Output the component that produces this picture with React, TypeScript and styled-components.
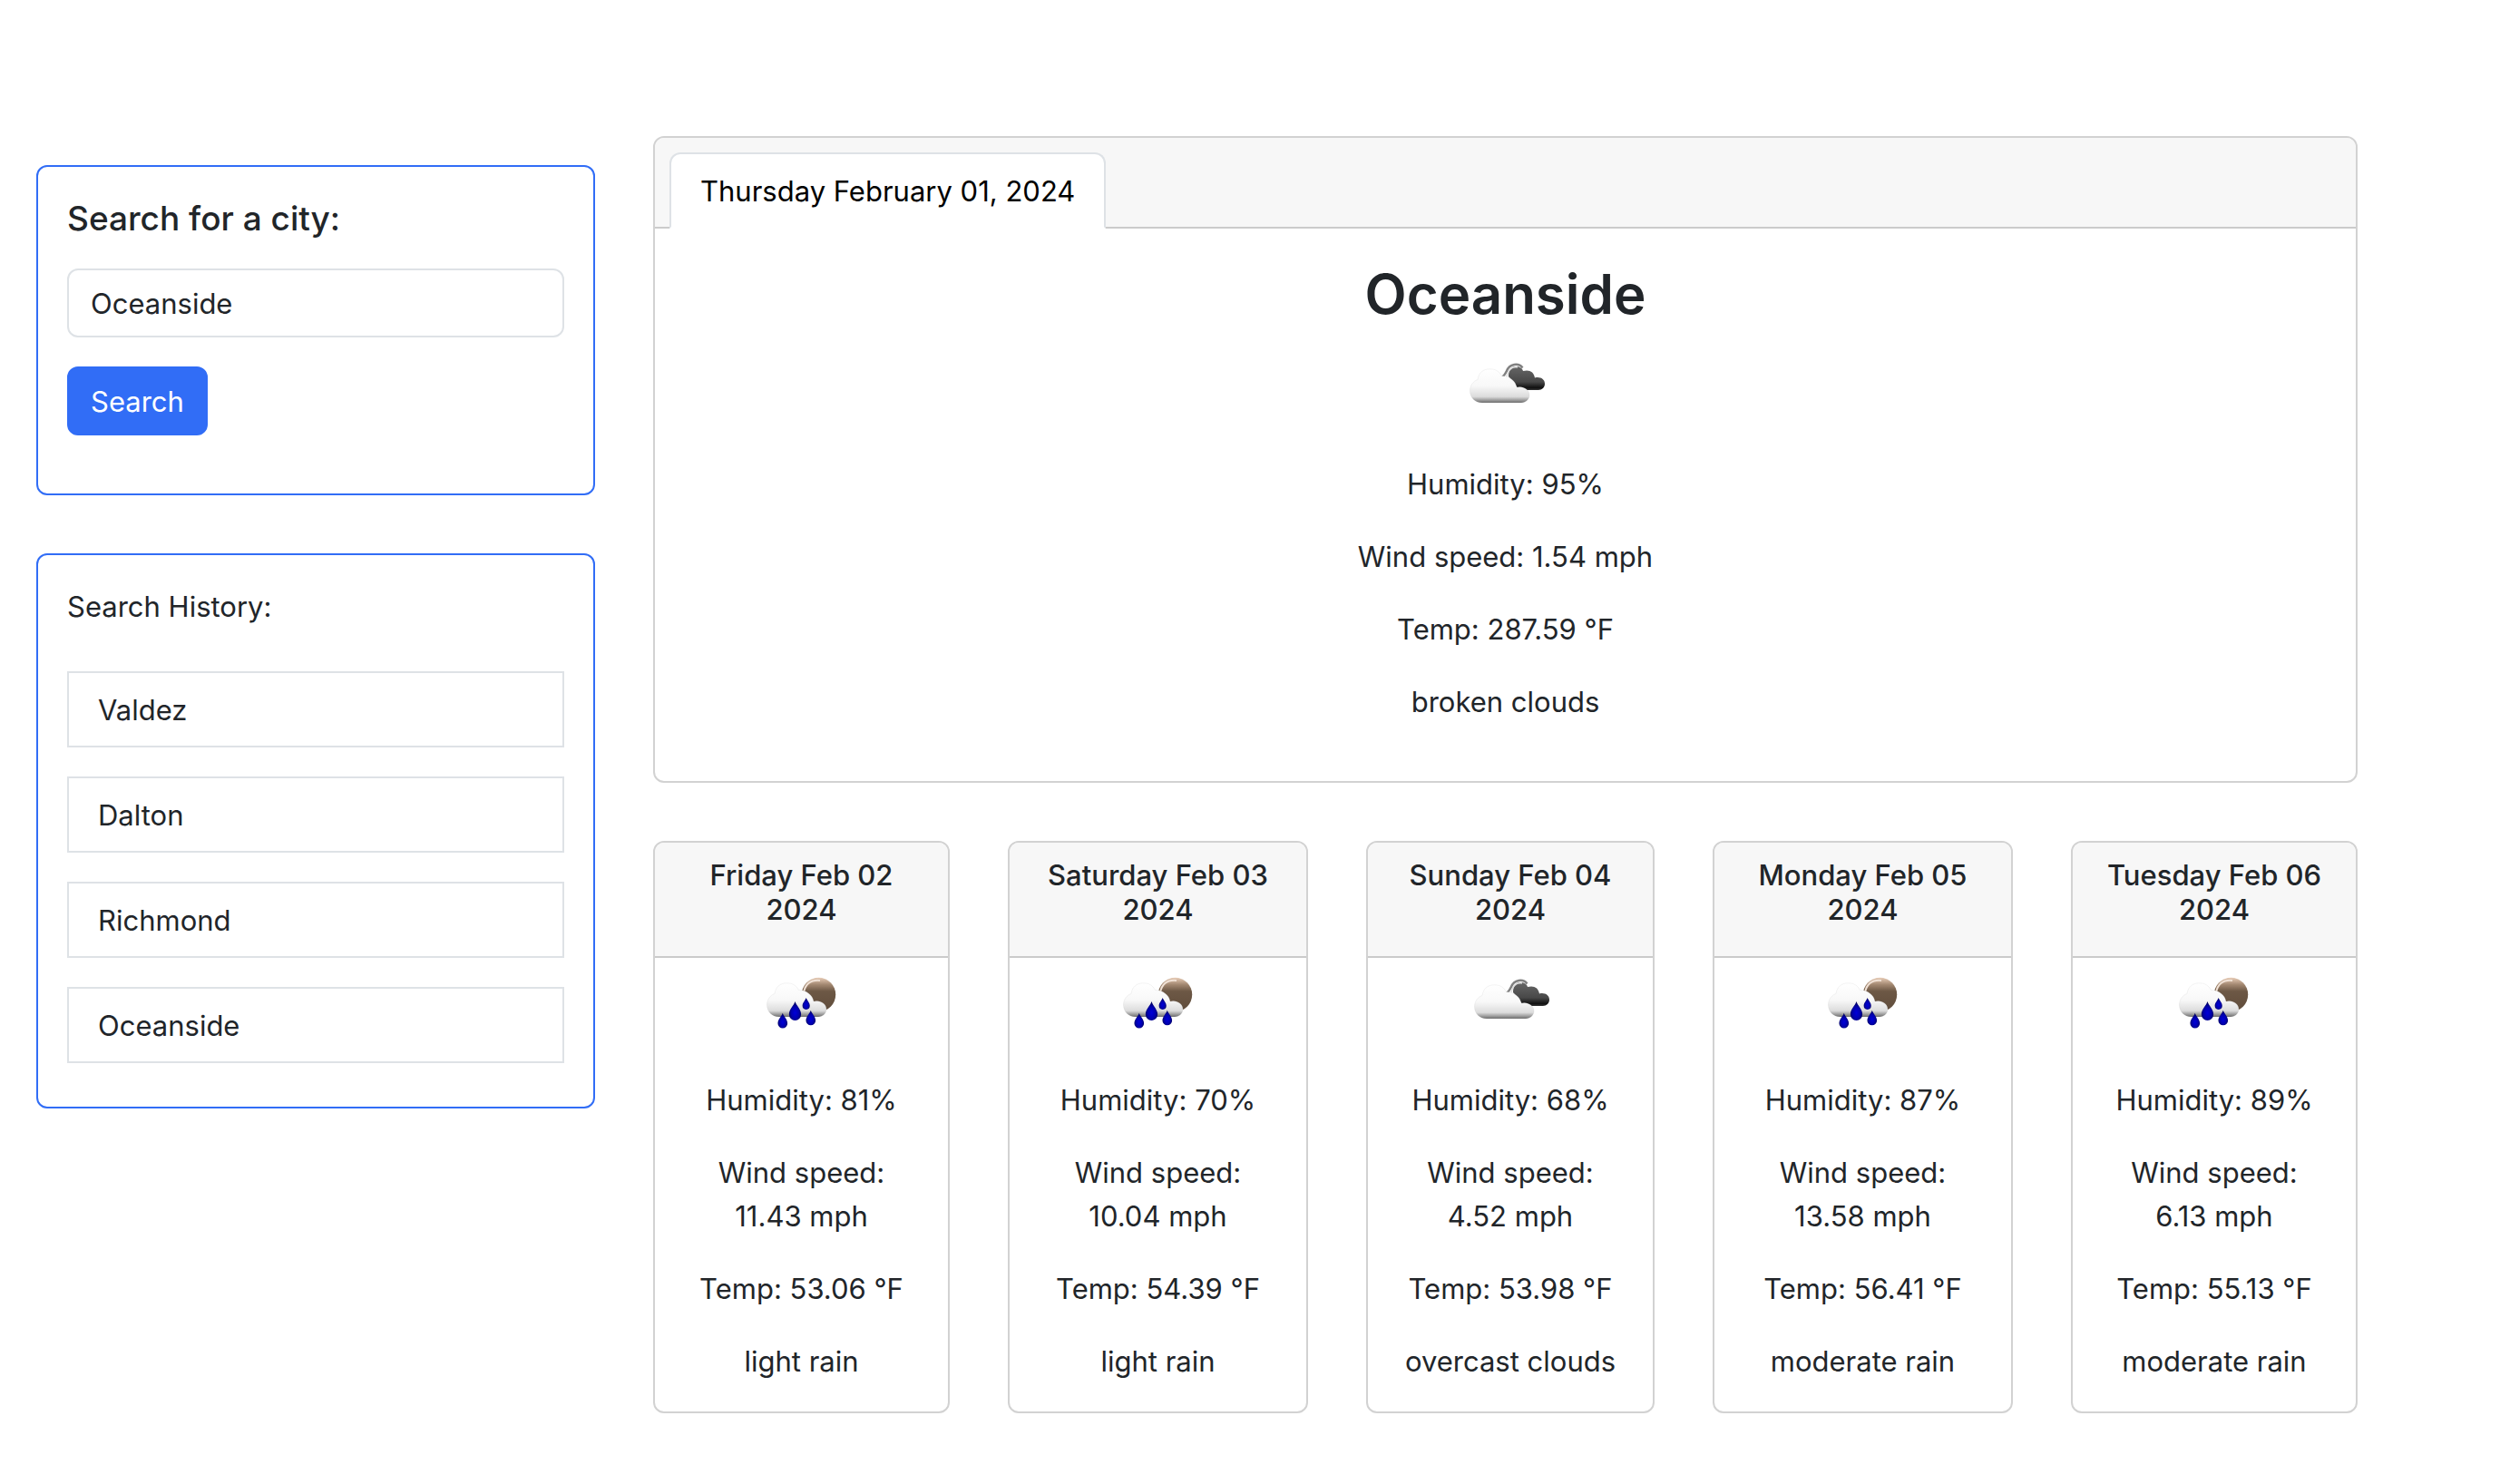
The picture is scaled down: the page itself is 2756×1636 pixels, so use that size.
import React, { useId, useState } from "react";
import styled, { createGlobalStyle } from "styled-components";

const GlobalStyle = createGlobalStyle`
  *, *::before, *::after { box-sizing: border-box; }
  body {
    margin: 0;
    background: #fff;
    color: #212529;
    font: 400 31px/48px Inter, "Liberation Sans", sans-serif;
  }
  h1, h2, p, ul { margin: 0; padding: 0; }
`;

const Page = styled.div`
  display: flex;
  align-items: flex-start;
  gap: 64px;
  padding: 150px 157px 78px 40px;
`;

const Sidebar = styled.aside`
  flex: 0 0 616px;
  display: flex;
  flex-direction: column;
  gap: 64px;
  padding-top: 32px;
`;

const Panel = styled.section`
  border: 2px solid #316df6;
  border-radius: 12px;
  padding: 33px 32px 31px;
`;

const SearchForm = styled.form`
  display: flex;
  flex-direction: column;
  align-items: flex-start;
  padding-bottom: 33px;
`;

const SearchLabel = styled.label`
  margin-bottom: 31px;
  font-size: 37px;
  line-height: 48px;
  font-weight: 500;
`;

const SearchInput = styled.input`
  width: 100%;
  height: 76px;
  margin-bottom: 32px;
  padding: 12px 24px;
  border: 2px solid #dee2e6;
  border-radius: 12px;
  background: #fff;
  color: inherit;
  font: inherit;
`;

const SearchButton = styled.button`
  height: 76px;
  padding: 13px 24px 11px;
  border: 2px solid #316df6;
  border-radius: 12px;
  background: #316df6;
  color: #fff;
  font: inherit;
  cursor: pointer;
`;

const HistoryList = styled.ul`
  display: flex;
  flex-direction: column;
  gap: 32px;
  padding: 47px 0 17px;
  list-style: none;
`;

const HistoryButton = styled.button`
  display: block;
  width: 100%;
  padding: 17px 32px 15px;
  border: 2px solid #dee2e6;
  background: #fff;
  color: inherit;
  font: inherit;
  text-align: left;
  cursor: pointer;
`;

const Main = styled.main`
  flex: 1;
  min-width: 0;
  display: flex;
  flex-direction: column;
  gap: 64px;
`;

const Card = styled.article`
  border: 2px solid #d2d2d2;
  border-radius: 12px;
  background: #fff;
  text-align: center;
`;

const TabBar = styled.header`
  display: flex;
  padding: 16px 16px 0;
  border-bottom: 2px solid #cbcbcb;
  border-radius: 10px 10px 0 0;
  background: #f7f7f7;
`;

const Tab = styled.button`
  margin-bottom: -2px;
  padding: 17px 32px 15px;
  border: 2px solid #dee2e6;
  border-bottom-color: #fff;
  border-radius: 12px 12px 0 0;
  background: #fff;
  color: #000;
  font: inherit;
`;

const CurrentBody = styled.div`
  padding: 34px 32px 31px;
`;

const City = styled.h1`
  margin-bottom: 14px;
  font-size: 60px;
  line-height: 77px;
  font-weight: 600;
`;

const ForecastRow = styled.section`
  display: grid;
  grid-template-columns: 327fr 331fr 318fr 331fr 316fr;
  gap: 64px;
`;

const DayHeader = styled.header`
  padding: 17px 16px 32px;
  border-bottom: 2px solid #cbcbcb;
  border-radius: 10px 10px 0 0;
  background: #f7f7f7;
`;

const DayTitle = styled.h2`
  font-size: 31px;
  line-height: 38px;
  font-weight: 500;
`;

const DayBody = styled.div`
  padding: 0 16px;
  margin-bottom: -1px;
`;

const Reading = styled.p`
  margin-bottom: 32px;
`;

const WeatherIcon = styled.svg`
  display: block;
  width: 100px;
  height: 100px;
  margin: 0 auto 33px;
`;

const CLOUD =
  "M24 67 C16 67 10.500 61 10.500 54 C10.500 48 14 43 19 41.500 C20 34 25 29.800 32.500 29.800 C38.500 29.800 43 32.500 45.500 37.500 C54 37.500 61 43 62 50 C68 48 76 52 76 58.500 C76 63 72 67 67 67 Z";

function CloudShape({ id }: { id: string }) {
  return (
    <>
      <defs>
        <linearGradient id={id} x1="0" y1="0" x2="0" y2="1">
          <stop offset="0" stopColor="#fff" />
          <stop offset="0.5" stopColor="#f8f8f8" />
          <stop offset="0.82" stopColor="#dcdcdc" />
          <stop offset="0.93" stopColor="#999" />
          <stop offset="1" stopColor="#6c6c6c" />
        </linearGradient>
      </defs>
      <path d={CLOUD} fill={`url(#${id})`} stroke="#999" strokeOpacity="0.12" />
    </>
  );
}

function CloudsIcon() {
  const id = useId();
  return (
    <WeatherIcon viewBox="0 0 100 100" role="img" aria-label="Clouds">
      <defs>
        <linearGradient id={id + "d"} x1="0" y1="0" x2="0" y2="1">
          <stop offset="0" stopColor="#666" />
          <stop offset="0.65" stopColor="#484848" />
          <stop offset="0.9" stopColor="#111" />
          <stop offset="1" stopColor="#333" />
        </linearGradient>
      </defs>
      <path
        d="M53 38 C53 30 57 27 61 27 C65 27 68 28.500 69 32 C76 30 81 33 82 39.500 C88 38 93 41 93 46 C93 50 90 53 86 53 L65 53 Z"
        fill={`url(#${id}d)`}
      />
      <path
        d="M46 38.500 C49 37 49 35 51 32 C54 24 64 22.500 68.500 28.500"
        fill="none"
        stroke="#808080"
        strokeWidth="2.500"
      />
      <path d="M51 38 C52.500 31 56 27 63 28" fill="none" stroke="#ddd" strokeWidth="1.500" />
      <CloudShape id={id + "c"} />
    </WeatherIcon>
  );
}

const DROP = "M0 -11 C1.500 -6 7 -2 7 4 A7 7 0 0 1 -7 4 C-7 -2 -1.500 -6 0 -11 Z";

function Drop({ x, y, scale, fill }: { x: number; y: number; scale: number; fill: string }) {
  return <path d={DROP} transform={`translate(${x} ${y}) scale(${scale})`} fill={fill} />;
}

function RainIcon() {
  const id = useId();
  const drop = `url(#${id}r)`;
  return (
    <WeatherIcon viewBox="0 0 100 100" role="img" aria-label="Rain">
      <defs>
        <linearGradient id={id + "m"} x1="0" y1="0" x2="0" y2="1">
          <stop offset="0" stopColor="#e8cdb8" />
          <stop offset="0.2" stopColor="#a48972" />
          <stop offset="0.4" stopColor="#6d5845" />
          <stop offset="1" stopColor="#5f4c3b" />
        </linearGradient>
        <radialGradient id={id + "r"} cx="0.5" cy="0.6" r="0.55">
          <stop offset="0" stopColor="#0000d8" />
          <stop offset="0.55" stopColor="#0000b0" />
          <stop offset="1" stopColor="#000058" />
        </radialGradient>
      </defs>
      <circle cx="68.500" cy="40.500" r="18.700" fill={`url(#${id}m)`} />
      <path d="M52 38 C54 29 60 24 70 25" fill="none" stroke="#f1e2d6" strokeWidth="2" />
      <g transform="translate(1 -2)">
        <CloudShape id={id + "c"} />
      </g>
      <Drop x={42.5} y={58.5} scale={0.95} fill={drop} />
      <Drop x={54.7} y={50.5} scale={0.58} fill={drop} />
      <Drop x={28.8} y={69.2} scale={0.76} fill={drop} />
      <Drop x={59.8} y={66} scale={0.76} fill={drop} />
    </WeatherIcon>
  );
}

const history = ["Valdez", "Dalton", "Richmond", "Oceanside"];

const forecast = [
  { day: "Friday Feb 02", humidity: 81, wind: "11.43", temp: "53.06", sky: "light rain", rain: true },
  { day: "Saturday Feb 03", humidity: 70, wind: "10.04", temp: "54.39", sky: "light rain", rain: true },
  { day: "Sunday Feb 04", humidity: 68, wind: "4.52", temp: "53.98", sky: "overcast clouds", rain: false },
  { day: "Monday Feb 05", humidity: 87, wind: "13.58", temp: "56.41", sky: "moderate rain", rain: true },
  { day: "Tuesday Feb 06", humidity: 89, wind: "6.13", temp: "55.13", sky: "moderate rain", rain: true },
];

export default function App() {
  const [city, setCity] = useState("Oceanside");
  return (
    <>
      <GlobalStyle />
      <Page>
        <Sidebar>
          <Panel>
            <SearchForm onSubmit={(e) => e.preventDefault()}>
              <SearchLabel htmlFor="city">Search for a city:</SearchLabel>
              <SearchInput id="city" value={city} onChange={(e) => setCity(e.target.value)} />
              <SearchButton type="submit">Search</SearchButton>
            </SearchForm>
          </Panel>
          <Panel>
            <p>Search History:</p>
            <HistoryList>
              {history.map((name) => (
                <li key={name}>
                  <HistoryButton type="button" onClick={() => setCity(name)}>
                    {name}
                  </HistoryButton>
                </li>
              ))}
            </HistoryList>
          </Panel>
        </Sidebar>
        <Main>
          <Card>
            <TabBar>
              <Tab type="button">Thursday February 01, 2024</Tab>
            </TabBar>
            <CurrentBody>
              <City>Oceanside</City>
              <CloudsIcon />
              <Reading>Humidity: 95%</Reading>
              <Reading>Wind speed: 1.54 mph</Reading>
              <Reading>Temp: 287.59 °F</Reading>
              <Reading>broken clouds</Reading>
            </CurrentBody>
          </Card>
          <ForecastRow>
            {forecast.map((d) => (
              <Card key={d.day}>
                <DayHeader>
                  <DayTitle>
                    {d.day}
                    <br />
                    2024
                  </DayTitle>
                </DayHeader>
                <DayBody>
                  {d.rain ? <RainIcon /> : <CloudsIcon />}
                  <Reading>Humidity: {d.humidity}%</Reading>
                  <Reading>
                    Wind speed:
                    <br />
                    {d.wind} mph
                  </Reading>
                  <Reading>Temp: {d.temp} °F</Reading>
                  <Reading>{d.sky}</Reading>
                </DayBody>
              </Card>
            ))}
          </ForecastRow>
        </Main>
      </Page>
    </>
  );
}
